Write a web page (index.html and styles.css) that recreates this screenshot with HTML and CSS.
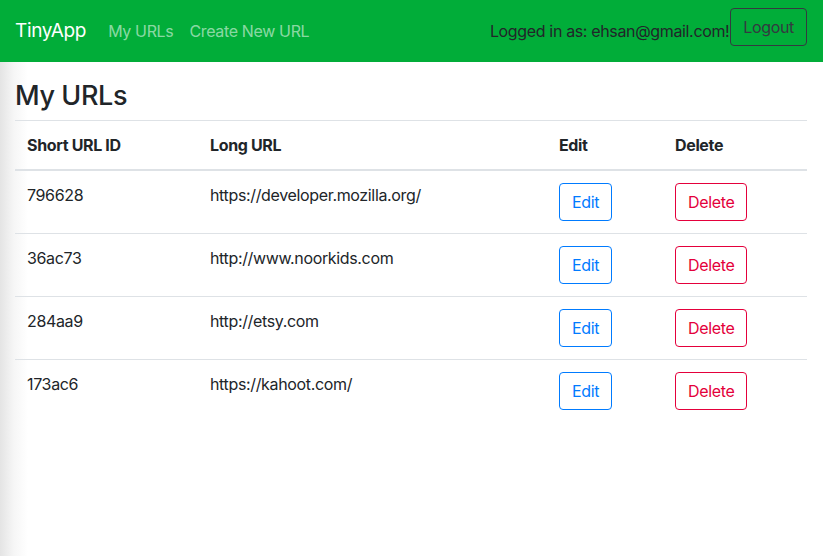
FILE: index.html
```html
<!DOCTYPE html>
<html lang="en">
<head>
<meta charset="utf-8">
<title>TinyApp</title>
<link rel="stylesheet" href="styles.css">
</head>
<body>
<nav class="navbar">
  <a class="brand" href="#">TinyApp</a>
  <div class="nav-links">
    <a class="nav-link" href="#">My URLs</a>
    <a class="nav-link" href="#">Create New URL</a>
  </div>
  <div class="nav-right">
    <span class="logged">Logged in as: ehsan@gmail.com!</span>
    <button class="btn btn-dark-outline">Logout</button>
  </div>
</nav>
<main class="content">
  <h2 class="title">My URLs</h2>
  <table class="table">
    <thead>
      <tr>
        <th class="c1">Short URL ID</th>
        <th class="c2">Long URL</th>
        <th class="c3">Edit</th>
        <th class="c4">Delete</th>
      </tr>
    </thead>
    <tbody>
      <tr>
        <td>796628</td>
        <td>https://developer.mozilla.org/</td>
        <td><button class="btn btn-edit">Edit</button></td>
        <td><button class="btn btn-delete">Delete</button></td>
      </tr>
      <tr>
        <td>36ac73</td>
        <td>http://www.noorkids.com</td>
        <td><button class="btn btn-edit">Edit</button></td>
        <td><button class="btn btn-delete">Delete</button></td>
      </tr>
      <tr>
        <td>284aa9</td>
        <td>http://etsy.com</td>
        <td><button class="btn btn-edit">Edit</button></td>
        <td><button class="btn btn-delete">Delete</button></td>
      </tr>
      <tr>
        <td>173ac6</td>
        <td>https://kahoot.com/</td>
        <td><button class="btn btn-edit">Edit</button></td>
        <td><button class="btn btn-delete">Delete</button></td>
      </tr>
    </tbody>
  </table>
</main>
</body>
</html>
```
FILE: styles.css
```css
* { box-sizing: border-box; }
html, body { height: 100%; }
body {
  margin: 0;
  font-family: Inter, "Liberation Sans", sans-serif;
  font-size: 16px;
  line-height: 1.5;
  letter-spacing: -0.35px;
  color: #212529;
  background: linear-gradient(to right, #e4e4e4 0px, #f6f6f6 14px, #ffffff 28px);
}
.navbar {
  height: 62px;
  background: #01ad39;
  display: flex;
  align-items: flex-start;
  padding: 0 16px 0 15px;
}
.brand {
  color: #fff;
  text-decoration: none;
  font-size: 19px;
  line-height: 30px;
  margin-top: 16px;
  margin-right: 22px;
}
.nav-links { display: flex; gap: 16px; margin-top: 19px; }
.nav-link {
  color: rgba(255,255,255,0.55);
  text-decoration: none;
  line-height: 24px;
}
.nav-right { margin-left: auto; display: flex; align-items: flex-start; }
.logged { margin-top: 19px; line-height: 24px; color: #212529; }
.btn {
  font-family: inherit;
  font-size: 16px;
  line-height: 24px;
  letter-spacing: -0.35px;
  padding: 6px 12px;
  border-radius: 4px;
  background: transparent;
  border: 1px solid;
  cursor: pointer;
}
.btn-dark-outline {
  margin-top: 8px;
  margin-left: 1px;
  color: #343a40;
  border-color: #343a40;
}
.content { padding: 18px 15px 0 15px; }
.title {
  margin: 0 0 8px 0;
  font-size: 27px;
  font-weight: 500;
  line-height: 1.2;
  letter-spacing: -0.4px;
}
.table {
  width: 792px;
  border-collapse: collapse;
  table-layout: fixed;
}
.table th, .table td {
  padding: 12px;
  text-align: left;
  vertical-align: top;
  border-top: 1px solid #dee2e6;
}
.table th { font-weight: 700; }
.table thead th { border-bottom: 2px solid #dee2e6; }
.c1 { width: 183px; }
.c2 { width: 349px; }
.c3 { width: 116px; }
.c4 { width: 144px; }
.btn-edit { color: #007bff; border-color: #007bff; }
.btn-delete { color: #e4003b; border-color: #e4003b; }
```
